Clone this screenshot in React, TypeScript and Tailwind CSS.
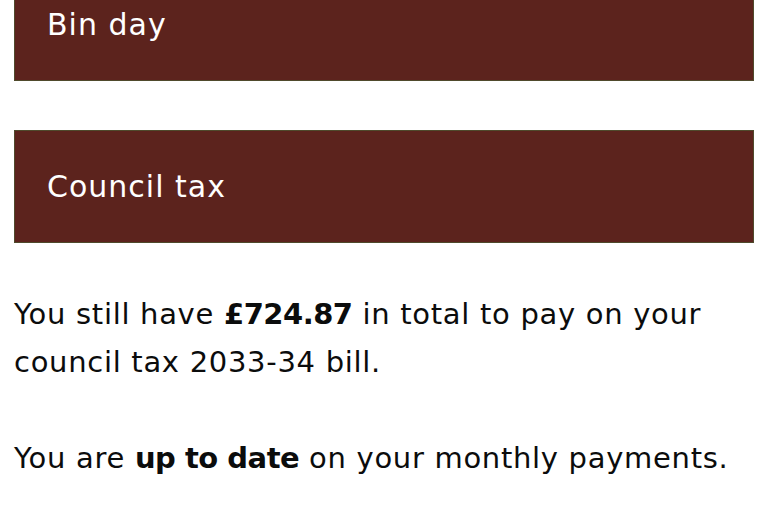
export default function App() {
  return (
    <div className="min-h-[512px] overflow-hidden bg-white font-['DejaVu_Sans',sans-serif] text-[#0b0c0c]">
      <div className="-mt-8 flex flex-col gap-[49px] px-[14px]">
        <div className="flex h-[113px] items-center border border-[#4f4a2c] bg-[#5c231d] px-8">
          <h2 className="text-[30px] tracking-[1px] text-white">Bin day</h2>
        </div>
        <div className="flex h-[113px] items-center border border-[#4f4a2c] bg-[#5c231d] px-8">
          <h2 className="text-[30px] tracking-[1px] text-white">Council tax</h2>
        </div>
      </div>
      <div className="px-[14px] pt-[47px] text-[29px] leading-[48px] tracking-[0.7px]">
        <p>
          You still have <strong className="font-bold tracking-[-0.5px]">£724.87</strong> in total to pay on your council tax 2033-34 bill.
        </p>
        <p className="mt-[48px]">
          You are <strong className="font-bold tracking-[-0.5px]">up to date</strong> on your monthly payments.
        </p>
      </div>
    </div>
  );
}
